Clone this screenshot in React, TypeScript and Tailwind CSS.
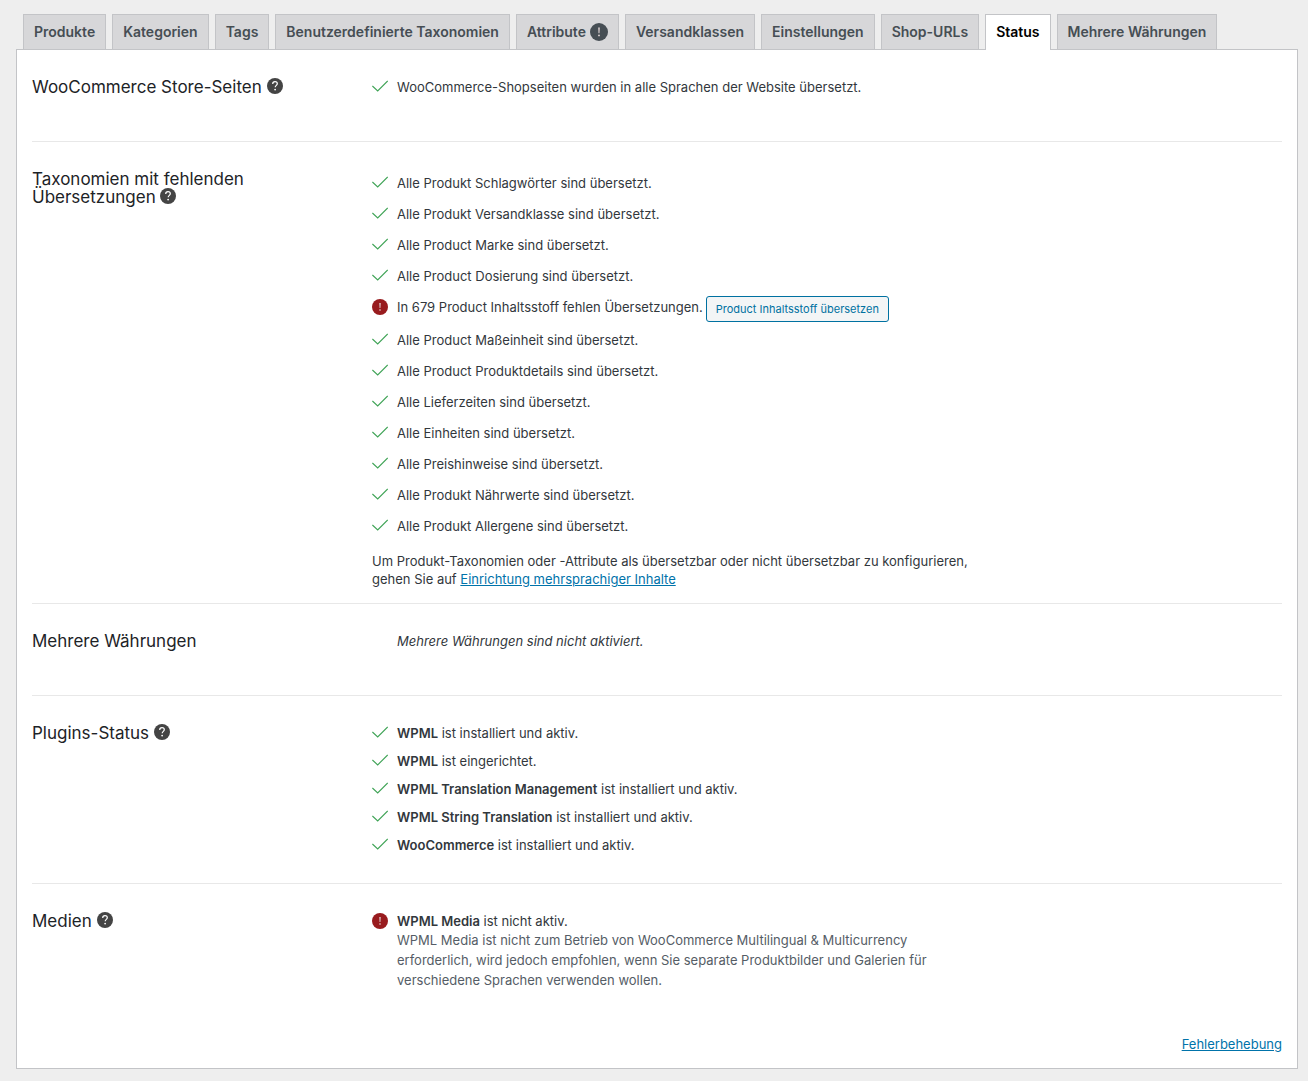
import type { FC, ReactNode } from 'react'
import clsx from 'clsx'

interface Tab {
  label: string
  warning?: boolean
}

interface StatusRow {
  text: string
  action?: string
}

interface Plugin {
  name: string
  state: string
}

const TABS: Tab[] = [
  { label: 'Produkte' },
  { label: 'Kategorien' },
  { label: 'Tags' },
  { label: 'Benutzerdefinierte Taxonomien' },
  { label: 'Attribute', warning: true },
  { label: 'Versandklassen' },
  { label: 'Einstellungen' },
  { label: 'Shop-URLs' },
  { label: 'Status' },
  { label: 'Mehrere Währungen' },
]

const TAXONOMIES: StatusRow[] = [
  { text: 'Alle Produkt Schlagwörter sind übersetzt.' },
  { text: 'Alle Produkt Versandklasse sind übersetzt.' },
  { text: 'Alle Product Marke sind übersetzt.' },
  { text: 'Alle Product Dosierung sind übersetzt.' },
  {
    text: 'In 679 Product Inhaltsstoff fehlen Übersetzungen.',
    action: 'Product Inhaltsstoff übersetzen',
  },
  { text: 'Alle Product Maßeinheit sind übersetzt.' },
  { text: 'Alle Product Produktdetails sind übersetzt.' },
  { text: 'Alle Lieferzeiten sind übersetzt.' },
  { text: 'Alle Einheiten sind übersetzt.' },
  { text: 'Alle Preishinweise sind übersetzt.' },
  { text: 'Alle Produkt Nährwerte sind übersetzt.' },
  { text: 'Alle Produkt Allergene sind übersetzt.' },
]

const PLUGINS: Plugin[] = [
  { name: 'WPML', state: 'ist installiert und aktiv.' },
  { name: 'WPML', state: 'ist eingerichtet.' },
  { name: 'WPML Translation Management', state: 'ist installiert und aktiv.' },
  { name: 'WPML String Translation', state: 'ist installiert und aktiv.' },
  { name: 'WooCommerce', state: 'ist installiert und aktiv.' },
]

const CheckIcon = () => (
  <svg viewBox="0 0 16 16" className="size-4 shrink-0" fill="none" aria-hidden="true">
    <path d="M0.4 8 5.7 12.9 15.7 2.9" stroke="#3fa356" strokeWidth="1.1" />
  </svg>
)

const WarningIcon: FC<{ className?: string }> = ({ className }) => (
  <svg viewBox="0 0 16 16" className={clsx('shrink-0', className)} aria-hidden="true">
    <circle cx="8" cy="8" r="8" fill="currentColor" />
    <path d="M7.3 4h1.4l-.3 5h-.8z" fill="#e6dada" />
    <circle cx="8" cy="11" r="0.8" fill="#e6dada" />
  </svg>
)

const HelpButton = () => (
  <button type="button" aria-label="Hilfe" className="inline-block size-4 align-top text-[#444]">
    <svg viewBox="0 0 16 16" className="size-4" fill="none" aria-hidden="true">
      <circle cx="8" cy="8" r="8" fill="currentColor" />
      <path
        d="M5.7 5.9C5.7 4.5 6.7 3.7 8 3.7s2.3.8 2.3 2c0 1.6-2.1 1.8-2.1 3.6"
        stroke="#fff"
        strokeWidth="1.2"
      />
      <circle cx="8.1" cy="11.6" r="0.9" fill="#fff" />
    </svg>
  </button>
)

const Section: FC<{ title: string; help?: boolean; last?: boolean; children: ReactNode }> = ({
  title,
  help = false,
  last = false,
  children,
}) => (
  <section className={clsx('flex pt-7', !last && 'border-b border-[#e8e8e8]')}>
    <div className="w-[340px] shrink-0 pr-20">
      <h2 className="text-[17px] leading-[18px] text-[#1d2327]">
        {title} {help && <HelpButton />}
      </h2>
    </div>
    <div className="min-w-0 flex-1">{children}</div>
  </section>
)

export default function App() {
  return (
    <div className="min-h-screen bg-[#eee] pt-3.5 pr-2.5 pb-3 pl-4 font-['Inter','Liberation_Sans',sans-serif] text-[13px] leading-[18px] text-[#32373c]">
      {/* Tabs */}
      <nav className="flex gap-1.5 pl-[7px] text-sm leading-6 font-semibold">
        {TABS.map(({ label, warning }) => (
          <a
            key={label}
            href="#"
            className={clsx(
              'flex items-center gap-1 border border-b-0 px-2.5 pt-[5px] whitespace-nowrap',
              label === 'Status'
                ? '-mb-px border-[#c3c4c7] bg-white pb-1.5 text-black'
                : 'border-[#c3c4c7] bg-[#d7d7d9] pb-[5px] text-[#464e54]',
            )}
          >
            {label}
            {warning && <WarningIcon className="size-[18px]" />}
          </a>
        ))}
      </nav>

      {/* Panel */}
      <main className="border border-[#c3c4c7] bg-white px-[15px] pb-[15px]">
        <Section title="WooCommerce Store-Seiten" help>
          <p className="mb-[45px] flex gap-[9px]">
            <CheckIcon />
            WooCommerce-Shopseiten wurden in alle Sprachen der Website übersetzt.
          </p>
        </Section>

        <Section title="Taxonomien mit fehlenden Übersetzungen" help>
          <ul className="pt-1">
            {TAXONOMIES.map(({ text, action }) => (
              <li key={text} className={clsx('flex gap-[9px]', action ? 'pb-[9px]' : 'pb-[13px]')}>
                {action ? <WarningIcon className="mt-px size-4 text-[#981b1e]" /> : <CheckIcon />}
                <span>{text}</span>
                {action && (
                  <button
                    type="button"
                    className="-mt-0.5 -ml-1.5 h-[26px] rounded-[3px] border border-[#0071a1] bg-[#f3f5f6] px-[9px] text-[11px] text-[#0071a1]"
                  >
                    {action}
                  </button>
                )}
              </li>
            ))}
          </ul>
          <p className="mt-1 mb-[15px] max-w-[600px]">
            Um Produkt-Taxonomien oder -Attribute als übersetzbar oder nicht übersetzbar zu
            konfigurieren, gehen Sie auf{' '}
            <a href="#" className="text-[#0073aa] underline">
              Einrichtung mehrsprachiger Inhalte
            </a>
          </p>
        </Section>

        <Section title="Mehrere Währungen">
          <p className="mb-[45px] pl-[25px] italic">Mehrere Währungen sind nicht aktiviert.</p>
        </Section>

        <Section title="Plugins-Status" help>
          <ul className="mb-[19px]">
            {PLUGINS.map(({ name, state }) => (
              <li key={name + state} className="flex gap-[9px] pb-2.5">
                <CheckIcon />
                <span>
                  <strong className="font-semibold">{name}</strong> {state}
                </span>
              </li>
            ))}
          </ul>
        </Section>

        <Section title="Medien" help last>
          <div className="flex gap-[9px]">
            <WarningIcon className="mt-px size-4 text-[#981b1e]" />
            <div className="max-w-[540px]">
              <p>
                <strong className="font-semibold">WPML Media</strong> ist nicht aktiv.
              </p>
              <p className="leading-5 text-[#555d66]">
                WPML Media ist nicht zum Betrieb von WooCommerce Multilingual &amp; Multicurrency
                erforderlich, wird jedoch empfohlen, wenn Sie separate Produktbilder und Galerien
                für verschiedene Sprachen verwenden wollen.
              </p>
            </div>
          </div>
        </Section>

        <p className="mt-[45px] text-right">
          <a href="#" className="text-[#0073aa] underline">
            Fehlerbehebung
          </a>
        </p>
      </main>
    </div>
  )
}
